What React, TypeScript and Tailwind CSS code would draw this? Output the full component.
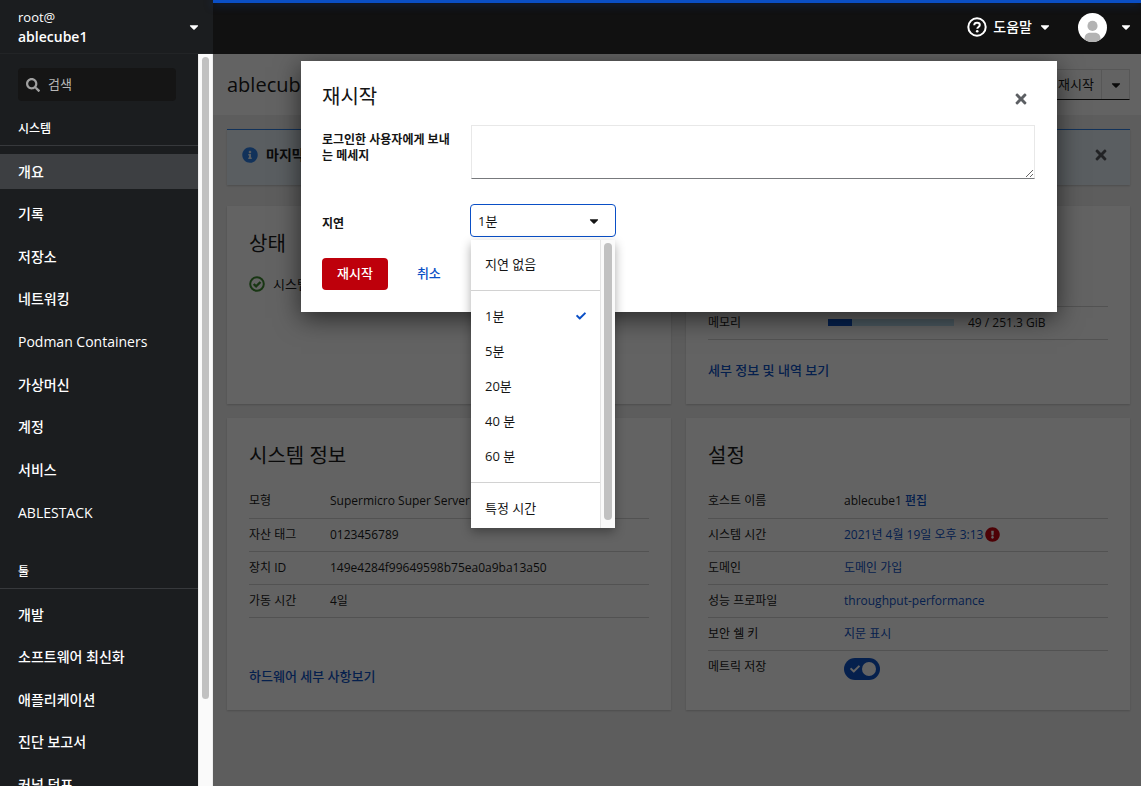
import type { ReactNode } from "react"
import { FaCaretDown, FaCheck, FaExclamationCircle, FaInfoCircle, FaSearch, FaTimes } from "react-icons/fa"

const systemItems = ["개요", "기록", "저장소", "네트워킹", "Podman Containers", "가상머신", "계정", "서비스", "ABLESTACK"]
const toolItems = ["개발", "소프트웨어 최신화", "애플리케이션", "진단 보고서", "커널 덤프"]
const delays = ["1분", "5분", "20분", "40 분", "60 분"]

function HelpIcon() {
  return (
    <svg viewBox="0 0 20 20" className="size-5" fill="none" stroke="currentColor">
      <circle cx="10" cy="10" r="8.7" strokeWidth="2" />
      <path d="M7.2 8.2C7.3 6.6 8.5 5.8 10 5.8c1.6 0 2.8.9 2.8 2.3 0 1.9-2.5 2-2.5 3.7" strokeWidth="2" />
      <circle cx="10.2" cy="14.2" r="1.3" fill="currentColor" stroke="none" />
    </svg>
  )
}

function OkIcon() {
  return (
    <svg viewBox="0 0 16 16" className="size-4 text-[#3b8a2e]" fill="none" stroke="currentColor">
      <circle cx="8" cy="8" r="6.8" strokeWidth="2" />
      <path d="M4.7 8l2.4 2.4 4.4-4.4" strokeWidth="2.4" />
    </svg>
  )
}

function NavItem({ label, active }: { label: string; active?: boolean }) {
  return (
    <li>
      <a
        href="#"
        aria-current={active ? "page" : undefined}
        className={`flex h-[35px] items-center pl-[18px] text-sm font-medium text-white ${active ? "bg-[#3d3f42]" : ""}`}
      >
        {label}
      </a>
    </li>
  )
}

function Sidebar() {
  return (
    <aside className="flex w-[213px] shrink-0 flex-col bg-[#1b1d1f] text-white">
      <button className="flex h-[54px] shrink-0 items-center justify-between border-b border-[#222426] pr-3 pl-[18px] text-left">
        <span>
          <span className="block text-[13px] leading-5">root@</span>
          <span className="block text-sm leading-5 font-semibold">ablecube1</span>
        </span>
        <FaCaretDown className="size-3.5" />
      </button>

      <div className="flex min-h-0 flex-1">
        <nav className="min-w-0 flex-1 overflow-hidden">
          <label className="mt-3.5 mr-[22px] ml-[18px] flex h-[33px] items-center gap-2 rounded-sm bg-[#151515] px-2">
            <FaSearch className="size-3.5 shrink-0 text-[#a0a0a0]" />
            <input
              type="search"
              aria-label="검색"
              placeholder="검색"
              className="w-full min-w-0 bg-transparent text-[13px] outline-none placeholder:text-[#b8b8b8]"
            />
          </label>

          <h2 className="mt-5 border-b border-[#37393c] pb-2 pl-[18px] text-xs leading-4 font-medium">시스템</h2>
          <ul className="mt-2 flex h-[376px] flex-col justify-between">
            {systemItems.map((item, i) => (
              <NavItem key={item} label={item} active={i === 0} />
            ))}
          </ul>

          <h2 className="mt-[34px] border-b border-[#37393c] pb-2 pl-[18px] text-xs leading-4 font-medium">툴</h2>
          <ul className="mt-2 flex h-[205px] flex-col justify-between">
            {toolItems.map((item) => (
              <NavItem key={item} label={item} />
            ))}
          </ul>
        </nav>
        <div className="w-[15px] border-x border-[#ededed] bg-[#fafafa] px-[3px] pt-[3px]">
          <div className="h-[88%] rounded-full bg-[#c1c1c1]" />
        </div>
      </div>
    </aside>
  )
}

function Masthead() {
  return (
    <header className="h-[54px] shrink-0 bg-[#111]">
      <div className="h-[3px] bg-[#0a4fc6] shadow-[0_1px_10px_#0a4fc680]" />
      <div className="flex h-[48px] items-center justify-end pr-2 text-white">
        <button className="flex items-center gap-1.5 text-sm font-medium">
          <HelpIcon />
          도움말
          <FaCaretDown className="size-3.5" />
        </button>
        <button className="ml-[26px] flex items-center gap-3" aria-label="계정">
          <svg viewBox="0 0 36 36" className="size-[29px]">
            <circle cx="18" cy="18" r="18" fill="#fff" />
            <circle cx="18" cy="16" r="6.3" fill="#b3b3b3" />
            <path d="M8 33c0-6 3-8.5 7-8.5h6c4 0 7 2.500 7 8.500a18 18 0 0 1-20 0z" fill="#b3b3b3" />
          </svg>
          <FaCaretDown className="size-3.5" />
        </button>
      </div>
    </header>
  )
}

function Card({ title, children }: { title: string; children: ReactNode }) {
  return (
    <section className="flex flex-col bg-white px-[22px] pt-6 pb-6 shadow-[0_1px_2px_#0003]">
      <h2 className="text-xl">{title}</h2>
      {children}
    </section>
  )
}

function Row({ label, head, children }: { label: string; head: string; children: ReactNode }) {
  return (
    <tr className="h-[33px] border-b border-[#d2d2d2]">
      <th scope="row" className={`text-left font-normal ${head}`}>
        {label}
      </th>
      <td>{children}</td>
    </tr>
  )
}

function Meter({ value, text }: { value: number; text: string }) {
  return (
    <div className="flex items-center gap-3.5">
      <div className="h-[7px] w-[126px] bg-[#bee1f4]">
        <div className="h-full bg-[#0a4fc6]" style={{ width: `${value}%` }} />
      </div>
      {text}
    </div>
  )
}

function Overview() {
  return (
    <div className="min-h-full">
      <div className="flex h-[61px] items-center justify-between bg-white pr-[11px] pl-3.5">
        <h1 className="text-xl">ablecube1</h1>
        <div className="flex h-[31px] border border-[#e0e0e0] border-b-[#151515] text-[13px]">
          <button className="px-[7px]">재시작</button>
          <button className="flex w-7 items-center justify-center border-l border-[#e0e0e0]" aria-label="전원 옵션">
            <FaCaretDown className="size-3.5" />
          </button>
        </div>
      </div>

      <div className="pr-[11px] pb-3.5 pl-3.5">
        <div className="mt-3.5 flex h-[56px] items-center gap-2 border-t border-[#2b7fe8] bg-[#e7f1fa] pr-[21px] pb-1.5 pl-[15px] text-sm font-bold shadow-[0_1px_2px_#0003]">
          <FaInfoCircle className="size-4 text-[#2b7fe8]" />
          마지막
          <button className="ml-auto" aria-label="알림 닫기">
            <FaTimes className="size-4 text-[#55585c]" />
          </button>
        </div>

        <div className="mt-[21px] grid grid-cols-2 grid-rows-[198px_292px] gap-x-[15px] gap-y-3.5">
          <Card title="상태">
            <p className="mt-4 flex items-center gap-2 text-[13px] leading-5">
              <OkIcon />
              시스템
            </p>
          </Card>

          <Card title="사용량">
            <table className="mt-[15px] w-full text-xs">
              <tbody>
                <Row head="w-[120px]" label="CPU">
                  <Meter value={2} text="2 / 40 CPU" />
                </Row>
                <Row head="w-[120px]" label="메모리">
                  <Meter value={19} text="49 / 251.3 GiB" />
                </Row>
              </tbody>
            </table>
            <a href="#" className="mt-auto text-[13px] leading-5 font-medium text-[#0a4fc6]">세부 정보 및 내역 보기</a>
          </Card>

          <Card title="시스템 정보">
            <table className="mt-[15px] w-full text-xs">
              <tbody>
                <Row head="w-[81px]" label="모형">Supermicro Super Server</Row>
                <Row head="w-[81px]" label="자산 태그">0123456789</Row>
                <Row head="w-[81px]" label="장치 ID">149e4284f99649598b75ea0a9ba13a50</Row>
                <Row head="w-[81px]" label="가동 시간">4일</Row>
              </tbody>
            </table>
            <a href="#" className="mt-auto text-[13px] leading-5 font-medium text-[#0a4fc6]">하드웨어 세부 사항보기</a>
          </Card>

          <Card title="설정">
            <table className="mt-[15px] w-full text-xs">
              <tbody>
                <Row head="w-[136px]" label="호스트 이름">
                  ablecube1 <a href="#" className="font-medium text-[#0a4fc6]">편집</a>
                </Row>
                <Row head="w-[136px]" label="시스템 시간">
                  <span className="flex items-center gap-0.5">
                    <a href="#" className="text-[#0a4fc6]">2021년 4월 19일 오후 3:13</a>
                    <FaExclamationCircle className="size-[15px] text-[#c4000c]" />
                  </span>
                </Row>
                <Row head="w-[136px]" label="도메인"><a href="#" className="text-[#0a4fc6]">도메인 가입</a></Row>
                <Row head="w-[136px]" label="성능 프로파일"><a href="#" className="text-[#0a4fc6]">throughput-performance</a></Row>
                <Row head="w-[136px]" label="보안 쉘 키"><a href="#" className="text-[#0a4fc6]">지문 표시</a></Row>
                <tr className="h-[33px]">
                  <th scope="row" className="text-left font-normal">메트릭 저장</th>
                  <td>
                    <label className="mt-1 flex h-[22px] w-9 items-center justify-between rounded-full bg-[#0a4fc6] pr-1 pl-1.5 text-white">
                      <input type="checkbox" aria-label="메트릭 저장" defaultChecked className="sr-only" />
                      <FaCheck className="size-2.5" />
                      <span className="size-3.5 rounded-full bg-white" />
                    </label>
                  </td>
                </tr>
              </tbody>
            </table>
          </Card>
        </div>
      </div>
    </div>
  )
}

function DelayMenu() {
  return (
    <div className="absolute top-9 left-px z-10 flex h-[288px] w-36 overflow-hidden bg-white text-[13px] shadow-[0_4px_10px_#0005]">
      <ul role="listbox" aria-label="지연" className="flex-1 py-[7px]">
        <li role="option" aria-selected={false} className="flex h-[35px] items-center px-3.5 pb-0.5">지연 없음</li>
        <li role="separator" className="my-2 h-px bg-[#d2d2d2]" />
        {delays.map((delay, i) => (
          <li key={delay} role="option" aria-selected={i === 0} className="flex h-[35px] items-center justify-between px-3.5 pb-0.5">
            {delay}
            {i === 0 && <FaCheck className="size-2.5 text-[#0a4fc6]" />}
          </li>
        ))}
        <li role="separator" className="my-2 h-px bg-[#d2d2d2]" />
        <li role="option" aria-selected={false} className="flex h-[35px] items-center px-3.5 pb-0.5">특정 시간</li>
      </ul>
      <div className="w-[15px] border-l border-[#e4e4e4] bg-[#fafafa] px-[3px] pt-[3px]">
        <div className="h-[277px] rounded-full bg-[#c1c1c1]" />
      </div>
    </div>
  )
}

function RestartDialog() {
  return (
    <form
      role="dialog"
      aria-labelledby="restart-title"
      className="w-[756px] max-w-full bg-white pt-[22px] pr-[22px] pb-[22px] pl-[21px] shadow-[0_6px_24px_#0009]"
    >
      <div className="flex items-center justify-between pr-1.5">
        <h1 id="restart-title" className="text-xl">재시작</h1>
        <button type="button" aria-label="닫기" className="pt-1">
          <FaTimes className="size-4 text-[#5c5f63]" />
        </button>
      </div>

      <div className="mt-3.5 grid grid-cols-[149px_1fr] gap-y-[25px] text-xs leading-4 font-bold">
        <label htmlFor="message" className="pt-[7px] pr-4">로그인한 사용자에게 보내는 메세지</label>
        <textarea id="message" className="h-[54px] w-full border border-[#e8e8e8] border-b-[#77797c] p-2 font-normal outline-none" />

        <label htmlFor="delay" className="self-center pt-1.5">지연</label>
        <div className="relative -ml-px w-[146px] text-[13px] font-normal">
          <select
            id="delay"
            className="h-[33px] w-full appearance-none rounded-sm border border-[#0a4fc6] bg-white px-[7px] outline-none"
          >
            <option>1분</option>
          </select>
          <FaCaretDown className="pointer-events-none absolute top-2.5 right-[15px] size-3.5" />
          <DelayMenu />
        </div>
      </div>

      <div className="mt-[21px] flex h-8 text-[13px] font-medium">
        <button type="submit" className="rounded-sm bg-[#be000b] px-[15px] text-white">재시작</button>
        <button type="button" className="ml-3.5 px-[15px] text-[#0a4fc6]">취소</button>
      </div>
    </form>
  )
}

export default function App() {
  return (
    <div className="flex h-screen overflow-hidden font-['Open_Sans','Noto_Sans_CJK_KR',sans-serif] text-[#151515]">
      <Sidebar />
      <div className="flex min-w-0 flex-1 flex-col">
        <Masthead />
        <main className="relative min-h-0 flex-1 overflow-hidden bg-[#f0f0f0]">
          <Overview />
          {/* Backdrop covers only the page frame, not the navigation */}
          <div className="absolute inset-0 flex items-start justify-center bg-[#030303]/62 pt-[7px] pl-1">
            <RestartDialog />
          </div>
        </main>
      </div>
    </div>
  )
}
